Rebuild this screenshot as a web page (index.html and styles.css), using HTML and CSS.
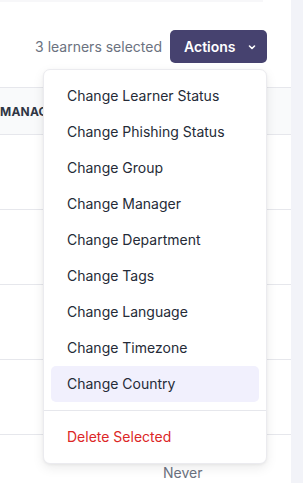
FILE: index.html
```html
<!DOCTYPE html>
<html lang="en">

<head>
	<title>Learners</title>
	<link rel="stylesheet" href="styles.css">
</head>

<body>

	<div class="card">
		<div class="top-edge"></div>
		<div class="toolbar">
			<span class="selected-count">3 learners selected</span>
			<div class="actions">
				<button class="actions-btn">Actions
					<svg width="10" height="10" viewBox="0 0 10 10"><path d="M2.5 4l2.5 2.5L7.5 4" fill="none" stroke="#fff" stroke-width="1.6" stroke-linecap="round" stroke-linejoin="round"/></svg>
				</button>
				<div class="menu">
					<div class="menu-group">
						<div class="menu-item">Change Learner Status</div>
						<div class="menu-item">Change Phishing Status</div>
						<div class="menu-item">Change Group</div>
						<div class="menu-item">Change Manager</div>
						<div class="menu-item">Change Department</div>
						<div class="menu-item">Change Tags</div>
						<div class="menu-item">Change Language</div>
						<div class="menu-item">Change Timezone</div>
						<div class="menu-item active">Change Country</div>
					</div>
					<div class="menu-group">
						<div class="menu-item danger">Delete Selected</div>
					</div>
				</div>
			</div>
		</div>

		<div class="table">
			<div class="thead">
				<span class="th">MANAGER</span>
			</div>
			<div class="row"></div>
			<div class="row"></div>
			<div class="row"></div>
			<div class="row"></div>
			<div class="row last"><span class="cell-gap"></span><span class="cell">Never</span></div>
		</div>
	</div>

	<div class="side"></div>

</body>

</html>
```

FILE: styles.css
```css
:root {
	--page-bg: #f2f3f8;
	--border: #e6e7ec;
	--text: #252b37;
	--muted: #6b7280;
	--brand: #46426f;
}
html { height: 483px; overflow: hidden; }
body {
	margin: 0;
	display: flex;
	height: 483px;
	overflow: hidden;
	background: var(--page-bg);
	font-family: Inter, "Noto Sans", sans-serif;
}
.card {
	width: 291px;
	flex-shrink: 0;
	background: #fff;
	position: relative;
	overflow: hidden;
}
.top-edge {
	height: 2px;
	width: 263px;
	background: #f7f7f9;
}
.side { flex: 1; }

.toolbar {
	display: flex;
	justify-content: flex-end;
	align-items: center;
	gap: 8px;
	height: 33px;
	padding: 28px 24px 24px 0;
}
.selected-count {
	font-size: 14px;
	color: var(--muted);
}
.actions { position: relative; }
.actions-btn {
	display: flex;
	align-items: center;
	gap: 11px;
	height: 33px;
	width: 97px;
	padding: 0 0 0 14px;
	border: none;
	border-radius: 5px;
	background: var(--brand);
	color: #fff;
	font-family: inherit;
	font-size: 14px;
	font-weight: 600;
}

.menu {
	position: absolute;
	top: 39px;
	right: 0;
	width: 222px;
	background: #fff;
	border: 1px solid #ebebef;
	border-radius: 7px;
	box-shadow: 0 4px 12px rgba(0, 0, 0, 0.08), 0 1px 3px rgba(0, 0, 0, 0.05);
	z-index: 10;
}
.menu-group { padding: 8px 7px; }
.menu-group + .menu-group { border-top: 1px solid var(--border); }
.menu-item {
	height: 36px;
	line-height: 36px;
	padding-left: 16px;
	font-size: 14px;
	color: var(--text);
	border-radius: 5px;
}
.menu-item.active { background: #f1f0fd; }
.menu-item.danger { color: #dc2626; }

.table { border-top: 1px solid var(--border); }
.thead {
	height: 46px;
	display: flex;
	align-items: center;
	background: #f9fafb;
}
.th {
	font-size: 12px;
	font-weight: 700;
	color: #2f3644;
	letter-spacing: 0.2px;
}
.row {
	height: 74px;
	border-top: 1px solid var(--border);
	display: flex;
	align-items: center;
}
.row.last { height: 48px; align-items: flex-end; padding-bottom: 0; }
.cell-gap { width: 163px; }
.cell {
	font-size: 14px;
	color: var(--muted);
	padding-bottom: 2px;
}
```
